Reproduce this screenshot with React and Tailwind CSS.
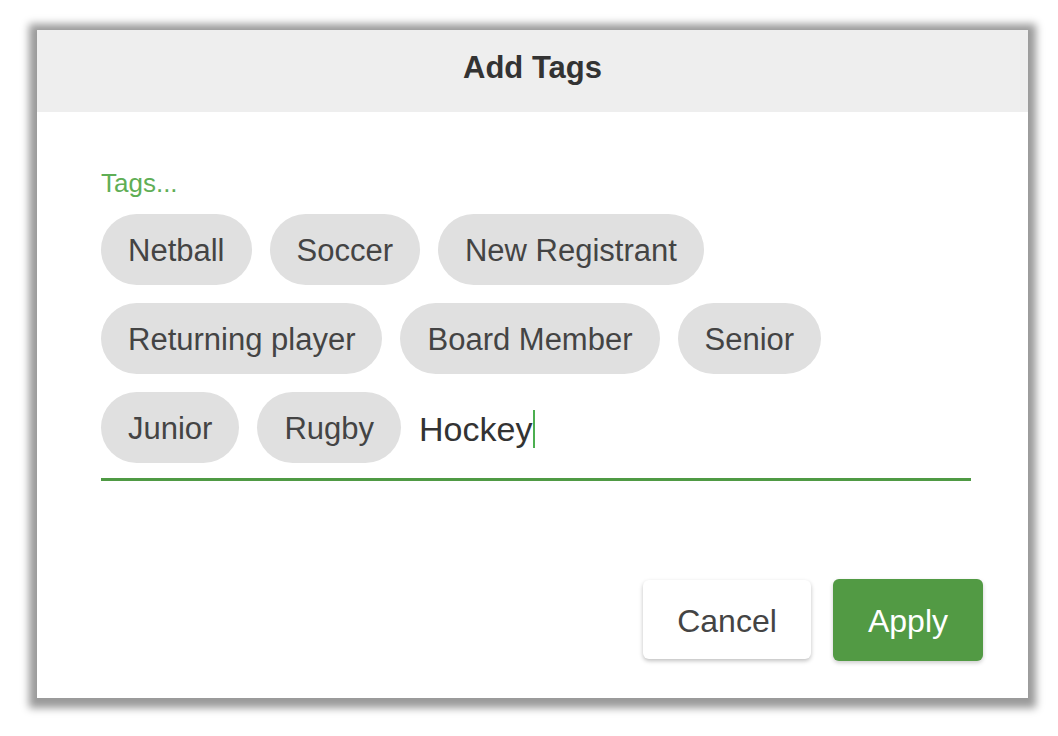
import React from "react";

const tagsRow = ["Netball", "Soccer", "New Registrant", "Returning player", "Board Member", "Senior", "Junior", "Rugby"];

function Chip({ label }) {
  return (
    <div className="h-[71px] px-[27px] rounded-full bg-[#e0e0e0] flex items-center text-[31px] leading-none text-[#444444] whitespace-nowrap">
      <span className="pt-[2px]">{label}</span>
    </div>
  );
}

export default function App() {
  return (
    <div
      className="w-[1058px] h-[736px] bg-white pt-[30px] pl-[37px]"
      style={{ fontFamily: '"Liberation Sans", Arial, sans-serif' }}
    >
      <div className="w-[991px] h-[668px] bg-white flex flex-col shadow-[0_2px_8px_8px_rgba(0,0,0,0.4)]">
        <div className="h-[82px] bg-[#eeeeee] pt-[20px] text-center text-[31px] font-bold leading-[1.15] text-[#333333]">
          Add Tags
        </div>
        <div className="pl-[64px] pt-[57px]">
          <div className="text-[26px] leading-[1.15] text-[#5fae55]">Tags...</div>
          <div className="mt-[15px] w-[870px] flex flex-wrap gap-[18px]">
            {tagsRow.map((t) => (
              <Chip key={t} label={t} />
            ))}
            <div className="h-[71px] flex items-center text-[34px] leading-none text-[#333333] pt-[4px]">
              <span>Hockey</span>
              <span className="ml-[1px] w-[2px] h-[38px] bg-[#4caf50]" />
            </div>
          </div>
          <div className="mt-[15px] w-[870px] h-[3px] bg-[#4f9a44]" />
        </div>
        <div className="flex justify-end items-start gap-[22px] pr-[45px] mt-[98px]">
          <button className="mt-[1px] w-[168px] h-[79px] rounded-[6px] bg-white text-[32px] text-[#444444] shadow-[0_2px_4px_rgba(0,0,0,0.25)]">
            <span className="relative top-[2px]">Cancel</span>
          </button>
          <button className="w-[150px] h-[82px] rounded-[6px] bg-[#529a44] text-[32px] text-white shadow-[0_2px_4px_rgba(0,0,0,0.2)]">
            <span className="relative top-[1px]">Apply</span>
          </button>
        </div>
      </div>
    </div>
  );
}
